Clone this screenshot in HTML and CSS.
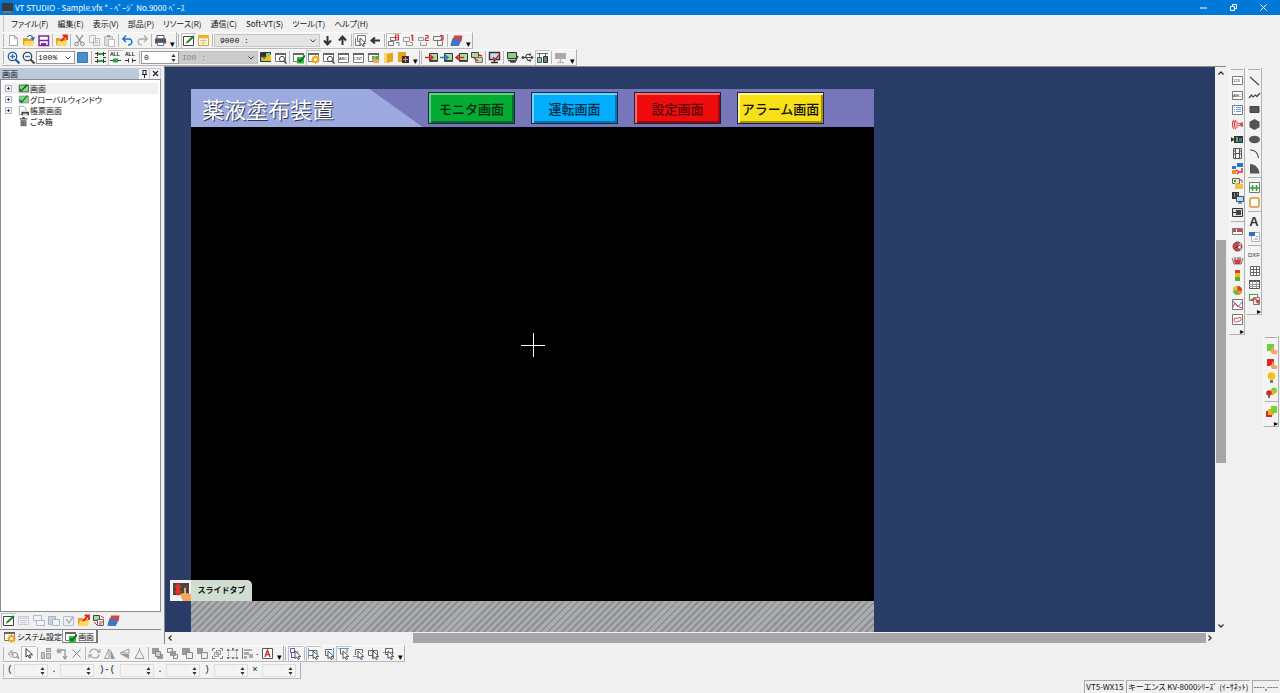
FILE: index.html
```html
<!DOCTYPE html>
<html lang="ja">
<head>
<meta charset="utf-8">
<title>VT STUDIO - Sample.vfx</title>
<link rel="stylesheet" href="styles.css">
</head>
<body>
<svg class="defs" aria-hidden="true">
  <symbol id="win" viewBox="0 0 13 13"><path d="M1.500 2.500h10v8h-10z" fill="#fff" stroke="#777"/><path d="M1 3h11" stroke="#666" stroke-width="2"/></symbol>
  <symbol id="cur" viewBox="0 0 13 13"><path d="M6 4v7.500l1.800-1.500 1.400 2.600 1.200-.6L9.200 9.500h2.600z" fill="#fff" stroke="#444" stroke-width=".9"/></symbol>
  <symbol id="mon" viewBox="0 0 13 13"><path d="M4.500 2.500h8v7h-8z" fill="#a8dca0" stroke="#333"/><path d="M4 10.500h9" stroke="#555"/></symbol>
  <symbol id="hand" viewBox="0 0 13 13"><path d="M5 8l2-.5V5l1.500-.3V8l4 .7-.5 3.300H7z" fill="#f2a85c"/></symbol>
  <symbol id="mag" viewBox="0 0 13 13"><circle cx="8" cy="8" r="2.600" fill="#fff" stroke="#444"/><path d="M10 10l2.500 2.500" stroke="#444" stroke-width="1.500"/></symbol>
  <symbol id="fold" viewBox="0 0 13 13"><path d="M1 4h4l1 1h5v7H1z" fill="#e8a020"/><path d="M1 12l2-5h9.500l-1.500 5z" fill="#ffd768"/></symbol>
  <symbol id="layers" viewBox="0 0 13 13"><path d="M4 1.500h8.500l-1 6H3z" fill="#d8443c"/><path d="M2.500 4H11l-1 6H1.500z" fill="#8a5a80"/><path d="M1.500 6.500H10l-1 5.500H.5z" fill="#3c78c8"/></symbol>
  <symbol id="edit" viewBox="0 0 13 13"><path d="M1.500 2.500h10v9h-10z" fill="#fff" stroke="#444"/><path d="M5 8.500l7-6.500" stroke="#168c28" stroke-width="2"/><path d="M3.500 10l1-2 1 1z" fill="#a52"/></symbol>
  <symbol id="gear" viewBox="0 0 13 13"><circle cx="8.500" cy="8.500" r="2.500" fill="#fff" stroke="#f0a818" stroke-width="2"/><path d="M8.500 4v9M4 8.500h9M5.500 5.500l6 6M11.500 5.500l-6 6" stroke="#f0a818"/><circle cx="8.500" cy="8.500" r="1.500" fill="#fff"/></symbol>
  <symbol id="check" viewBox="0 0 13 13"><path d="M5 6h7v6.500H5z" fill="#38b840"/><path d="M6 8.500l2 2 5-6" stroke="#087018" stroke-width="1.800"/></symbol>
  <symbol id="chev" viewBox="0 0 8 8"><path d="M1.500 5.500L4 3l2.500 2.500" stroke="#333" stroke-width="1.300"/></symbol>
  <symbol id="ud" viewBox="0 0 8 10"><path d="M2 4l2-3 2 3zM2 6l2 3 2-3z" fill="#333"/></symbol>
</svg>

<header class="titlebar">
  <svg class="ic" viewBox="0 0 13 13"><path d="M1 2h11v8H1z" fill="#383c40"/><path d="M2 10h9v2H2z" fill="#777"/></svg>
  <h1>VT STUDIO - Sample.vfx * - ﾍﾟｰｼﾞ No.9000 ﾍﾞｰｽ</h1>
  <div class="winbtns">
    <button aria-label="最小化"><svg class="ic" viewBox="0 0 13 13"><path d="M3 7h7" stroke="#fff"/></svg></button>
    <button aria-label="元に戻す"><svg class="ic" viewBox="0 0 13 13"><path d="M3.500 5.500h4v4h-4zM5.500 5V3.500h4v4H8" stroke="#fff"/></svg></button>
    <button aria-label="閉じる"><svg class="ic" viewBox="0 0 13 13"><path d="M3.500 3.500l6 6M9.500 3.500l-6 6" stroke="#fff"/></svg></button>
  </div>
</header>

<nav class="menu">
  <button>ファイル(F)</button><button>編集(E)</button><button>表示(V)</button><button>部品(P)</button><button>リソース(R)</button><button>通信(C)</button><button>Soft-VT(S)</button><button>ツール(T)</button><button>ヘルプ(H)</button>
</nav>

<div class="toolrow">
  <div class="bar first">
    <button aria-label="新規"><svg class="ic" viewBox="0 0 13 13"><path d="M2.500 1.500h5l3 3v7h-8zM7.500 1.500v3h3" fill="#fff" stroke="#aaa"/></svg></button>
    <button aria-label="開く"><svg class="ic" viewBox="0 0 13 13"><use href="#fold"/><path d="M5 3c3-3 6-1 6 2M9 4l2 2 1.500-3" stroke="#2868b0" stroke-width="1.200"/></svg></button>
    <button aria-label="保存"><svg class="ic" viewBox="0 0 13 13"><path d="M2 2h9.500v9.500H2z" fill="#fff" stroke="#7a2ca0" stroke-width="1.500"/><path d="M2 6.500h9" stroke="#7a2ca0" stroke-width="1.500"/><path d="M4 9h5v3H4z" fill="#7a2ca0"/></svg></button>
    <i class="sep"></i>
    <button aria-label="書き出し"><svg class="ic" viewBox="0 0 13 13"><use href="#fold"/><path d="M6 7l5-5M7.500 1.500H12V6" stroke="#d83018" stroke-width="1.800"/></svg></button>
    <i class="sep"></i>
    <button aria-label="切り取り"><svg class="ic" viewBox="0 0 13 13"><path d="M3 1l5.500 8M10 1L4.500 9" stroke="#888" stroke-width="1.300"/><circle cx="3.500" cy="10" r="1.800" stroke="#888"/><circle cx="9.500" cy="10" r="1.800" stroke="#888"/></svg></button>
    <button aria-label="コピー"><svg class="ic" viewBox="0 0 13 13"><path d="M1.500 1.500h6v7h-6zM5.500 4.500h6v7h-6z" fill="#f4f4f4" stroke="#bbb"/><path d="M7 7h3M7 9h3" stroke="#bbb"/></svg></button>
    <button aria-label="貼り付け"><svg class="ic" viewBox="0 0 13 13"><path d="M1.500 2.500h8v9h-8z" fill="#ddd" stroke="#bbb"/><path d="M5.500 5.500h6v7h-6z" fill="#fff" stroke="#bbb"/><path d="M4 1h3v2H4z" fill="#999"/></svg></button>
    <i class="sep"></i>
    <button aria-label="元に戻す"><svg class="ic" viewBox="0 0 13 13"><path d="M3 5h5c4 0 4 6-1 6M5 1.500L1.800 5 5 8" stroke="#2070c8" stroke-width="1.500"/></svg></button>
    <button aria-label="やり直し"><svg class="ic" viewBox="0 0 13 13"><path d="M10 5H5c-4 0-4 6 1 6M8 1.500L11.200 5 8 8" stroke="#aaa" stroke-width="1.300"/></svg></button>
    <i class="sep"></i>
    <button aria-label="印刷"><svg class="ic" viewBox="0 0 13 13"><path d="M3 1.500h7V5H3z" fill="#fff" stroke="#555"/><path d="M1 4.500h11v5H1z" fill="#555"/><path d="M3.500 8.500h6v3h-6z" fill="#fff" stroke="#4a78a8"/></svg></button>
    <button class="more" aria-label="その他">▾</button>
  </div>
  <div class="bar">
    <button class="on" aria-label="編集"><svg class="ic"><use href="#edit"/></svg></button>
    <button aria-label="一覧"><svg class="ic" viewBox="0 0 13 13"><path d="M1.500 1.500h10v10h-10z" fill="#fff" stroke="#d8a828"/><path d="M1 3h11" stroke="#f0b428" stroke-width="3"/><path d="M3 6.500h7M3 9h7M6.500 5v6" stroke="#d8c080"/></svg></button>
    <i class="sep"></i>
    <select class="combo page" aria-label="ページ"><option>9000 :</option></select>
    <button aria-label="次のページ"><svg class="ic" viewBox="0 0 13 13"><path d="M6.500 2v8M3 6.500l3.500 4 3.500-4" stroke="#333" stroke-width="2"/></svg></button>
    <button aria-label="前のページ"><svg class="ic" viewBox="0 0 13 13"><path d="M6.500 11V3M3 6.500l3.500-4 3.500 4" stroke="#333" stroke-width="2"/></svg></button>
    <i class="sep"></i>
    <button class="on" aria-label="部品選択"><svg class="ic" viewBox="0 0 13 13"><path d="M3.500 1.500h8v6h-8zM1.500 4v7.500H6" stroke="#777"/><use href="#cur"/></svg></button>
    <button aria-label="戻る"><svg class="ic" viewBox="0 0 13 13"><path d="M11 6.500H3M6 3.500l-3.500 3 3.500 3" stroke="#333" stroke-width="2"/></svg></button>
    <i class="sep"></i>
    <button class="on" aria-label="ウィンドウ0"><svg class="ic" viewBox="0 0 13 13"><path d="M3.500 3.500h5v3h-5zM1.500 7.500h5v4h-5zM9 8.500h3V12" stroke="#777"/><path d="M8.500 1h3v5h-3zM8.500 3.500h3" stroke="#d83030" stroke-width="1.200"/></svg></button>
    <button aria-label="ウィンドウ1"><svg class="ic" viewBox="0 0 13 13"><path d="M1.500 3.500h6v4h-6zM4.500 8v3.500h6v-3H8" stroke="#999"/><path d="M9 1.500h1.500V7" stroke="#d83030" stroke-width="1.500"/></svg></button>
    <button aria-label="ウィンドウ2"><svg class="ic" viewBox="0 0 13 13"><path d="M1.500 3.500h5v3h-5zM3.500 8v3.500h6v-3" stroke="#999"/><path d="M8 1.500h3v2.500H8.500v2.500H12" stroke="#d83030" stroke-width="1.200"/></svg></button>
    <button aria-label="ウィンドウ3"><svg class="ic" viewBox="0 0 13 13"><path d="M1.500 2.500h8v4h-8zM5.500 7v4.500h5V7" stroke="#777"/><path d="M8 1.500h3V6H8M9 4h2" stroke="#d83030" stroke-width="1.200"/></svg></button>
    <i class="sep"></i>
    <button aria-label="レイヤ"><svg class="ic"><use href="#layers"/></svg></button>
    <button class="more" aria-label="その他">▾</button>
  </div>
</div>

<div class="toolrow">
  <div class="bar first">
    <button aria-label="拡大"><svg class="ic" viewBox="0 0 13 13"><circle cx="5.500" cy="5.500" r="4.200" fill="#fff" stroke="#285888" stroke-width="1.300"/><path d="M8.500 8.500l4 4" stroke="#285888" stroke-width="2"/><path d="M3 5.500h5M5.500 3v5" stroke="#2878d0" stroke-width="1.500"/></svg></button>
    <button aria-label="縮小"><svg class="ic" viewBox="0 0 13 13"><circle cx="5.500" cy="5.500" r="4.200" fill="#fff" stroke="#444" stroke-width="1.300"/><path d="M8.500 8.500l4 4" stroke="#444" stroke-width="2"/><path d="M3 5.500h5" stroke="#2878d0" stroke-width="1.500"/></svg></button>
    <select class="combo zoom" aria-label="倍率"><option>100%</option></select>
    <button aria-label="背景色"><svg class="ic" viewBox="0 0 13 13"><path d="M1.500 1.500h10v10h-10z" fill="#4a8ccc" stroke="#3a78b8"/></svg></button>
    <i class="sep"></i>
    <button aria-label="間隔"><svg class="ic" viewBox="0 0 13 13"><path d="M1 2.500h11M1 6.500h3M9 6.500h3M1 10.500h11" stroke="#333"/><path d="M4 2h5v2H4zM4 9h5v2H4z" fill="#2ca838"/><path d="M3.500 1v4M9.500 1v4M3.500 8v4M9.500 8v4" stroke="#333"/></svg></button>
    <button class="on" aria-label="全て表示"><svg class="ic" viewBox="0 0 13 13"><text x="1" y="5" class="tiny">ALL</text><path d="M1 9.500h11" stroke="#333"/><path d="M4 7.500h5v4H4z" fill="#2ca838"/></svg></button>
    <button aria-label="全て隠す"><svg class="ic" viewBox="0 0 13 13"><text x="1" y="5" class="tiny">ALL</text><path d="M1 9.500h3M9 9.500h3M4.500 7.500v4M8.500 7.500v4" stroke="#333"/></svg></button>
    <i class="sep"></i>
    <span class="spin state"><input aria-label="状態" value="0"><svg class="ud"><use href="#ud"/></svg></span>
    <select class="combo ident" aria-label="ID" disabled><option>ID0 :</option></select>
    <button aria-label="色替え"><svg class="ic" viewBox="0 0 13 13"><path d="M1.500 1.500h10v9h-10z" fill="#8c6" stroke="#333"/><path d="M2 2h5v4H2z" fill="#333"/><path d="M4 10l8-7v7z" fill="#f0c020"/><path d="M3 6l3-1v3z" fill="#e02818"/></svg></button>
    <button aria-label="画面検索"><svg class="ic"><use href="#win"/><use href="#mag"/></svg></button>
    <i class="sep"></i>
    <button aria-label="画面チェック"><svg class="ic"><use href="#win"/><use href="#check"/></svg></button>
    <button class="on" aria-label="画面設定"><svg class="ic"><use href="#win"/><use href="#gear"/></svg></button>
    <button aria-label="検索"><svg class="ic"><use href="#win"/><use href="#mag"/></svg></button>
    <button aria-label="ABC"><svg class="ic" viewBox="0 0 13 13"><path d="M1.500 2.500h10v9h-10z" fill="#fff" stroke="#777"/><path d="M1 3h11" stroke="#666" stroke-width="2"/><text x="2" y="9" class="micro">ABC</text></svg></button>
    <button aria-label="CNT"><svg class="ic" viewBox="0 0 13 13"><path d="M1.500 2.500h10v9h-10z" fill="#fff" stroke="#777"/><path d="M1 3h11" stroke="#666" stroke-width="2"/><text x="2" y="9" class="micro">CNT</text></svg></button>
    <button aria-label="スイッチ"><svg class="ic" viewBox="0 0 13 13"><use href="#win"/><path d="M5 5h7v5H5z" fill="#38b838"/><use href="#hand"/></svg></button>
    <button aria-label="マニュアル"><svg class="ic" viewBox="0 0 13 13"><path d="M2 2h4v10H2z" fill="#f8d470"/><path d="M5 3l6-1.500v9L5 12z" fill="#e8a420"/></svg></button>
    <button aria-label="デバイス"><svg class="ic" viewBox="0 0 13 13"><path d="M1 1h8v10H1z" fill="#e8a420"/><path d="M5 5h7v7H5z" fill="#333"/><path d="M6 8.500h5M8.500 6v5" stroke="#e88"/></svg></button>
    <button class="more" aria-label="その他">▾</button>
  </div>
  <div class="bar">
    <button aria-label="転送"><svg class="ic"><use href="#mon"/><path d="M0 6.500h7M5 4l3 2.500L5 9" stroke="#d82820" stroke-width="1.600"/></svg></button>
    <button aria-label="差分転送"><svg class="ic"><use href="#mon"/><path d="M0 6.500h7M5 4l3 2.500L5 9" stroke="#2878c8" stroke-width="1.600"/></svg></button>
    <button aria-label="受信"><svg class="ic"><use href="#mon"/><path d="M1 6.500h8M4 4L1 6.500 4 9" stroke="#d82820" stroke-width="1.600"/></svg></button>
    <button aria-label="照合"><svg class="ic" viewBox="0 0 13 13"><path d="M1.500 1.500h7v5h-7z" fill="#a8dca0" stroke="#444"/><path d="M5.500 6.500h7v5h-7z" fill="#b8dcb0" stroke="#777"/><path d="M3 6l5 4M9 4l3 1" stroke="#d82820" stroke-width="1.400"/></svg></button>
    <i class="sep"></i>
    <button aria-label="シミュレータ"><svg class="ic" viewBox="0 0 13 13"><path d="M1.500 1.500h10v7h-10z" fill="#c4dcf0" stroke="#333" stroke-width="1.400"/><path d="M3 11.500h7M6.500 9v2" stroke="#333" stroke-width="1.500"/><path d="M5 6l2 2.500L12 3" stroke="#d82820" stroke-width="1.500"/></svg></button>
    <i class="sep"></i>
    <button aria-label="PC接続"><svg class="ic" viewBox="0 0 13 13"><path d="M1.500 1.500h9v6h-9z" fill="#8ccc80" stroke="#333"/><path d="M4 11h5l3-6M2 9.500h8" stroke="#444" stroke-width="1.500"/></svg></button>
    <button aria-label="USB"><svg class="ic" viewBox="0 0 13 13"><path d="M2 6.500h9M4 6.500l2-3h2M5 6.500l2 3h2" stroke="#444" stroke-width="1.100"/><circle cx="2" cy="6.500" r="1.500" fill="#444"/><path d="M10 4.500l3 2-3 2zM8 2.500h2v2H8zM8 8.500h2v2H8z" fill="#444"/></svg></button>
    <button class="on" aria-label="ネットワーク"><svg class="ic" viewBox="0 0 13 13"><path d="M1 2.500h11M3.500 2v4M9.500 2v4" stroke="#666"/><path d="M1.500 6.500h4v5h-4z" fill="#9cc890" stroke="#357"/><path d="M7.500 5.500h4v6h-4z" fill="#686" stroke="#333"/></svg></button>
    <i class="sep"></i>
    <button aria-label="VT本体" disabled><svg class="ic" viewBox="0 0 13 13"><path d="M1 2h11v6H1z" fill="#aaa"/><path d="M6.500 8v3M3 11.500h7" stroke="#bbb" stroke-width="1.500"/></svg></button>
    <button class="more" aria-label="その他">▾</button>
  </div>
</div>

<main class="work">
  <aside class="side">
    <div class="side-head"><h2>画面</h2><button aria-label="固定"><svg class="ic s" viewBox="0 0 9 9"><path d="M3 1v4M6 1v4M3 1.500h3M2 5.500h5M4.500 6v3" stroke="#222"/></svg></button><button aria-label="閉じる"><svg class="ic s" viewBox="0 0 9 9"><path d="M2 2l5 5M7 2L2 7" stroke="#222" stroke-width="1.200"/></svg></button></div>
    <ul class="tree">
      <li class="sel"><i class="plus"></i><svg class="ic t" viewBox="0 0 13 13"><path d="M1.500 2.500h11v8h-11z" fill="#7be07a" stroke="#444"/><path d="M5 8l6-6" stroke="#143" stroke-width="1.500"/><path d="M2 7l3 3" stroke="#143" stroke-width="1.500"/></svg>画面</li>
      <li><i class="plus"></i><svg class="ic t" viewBox="0 0 13 13"><path d="M1.500 2.500h11v8h-11z" fill="#7be07a" stroke="#888"/><path d="M5 9l6-7" stroke="#174" stroke-width="1.500"/><path d="M2 7l3 3" stroke="#143" stroke-width="1.500"/></svg>グローバルウィンドウ</li>
      <li><i class="plus"></i><svg class="ic t" viewBox="0 0 13 13"><path d="M1.500 1.500h5l3 3v7h-8z" fill="#fff" stroke="#999"/><path d="M4 8h9v4H4z" fill="#444"/><path d="M6 6h5v2H6zM6 10h5v2H6z" fill="#ddd"/></svg>帳票画面</li>
      <li><i class="plus none"></i><svg class="ic t" viewBox="0 0 13 13"><path d="M2 3.500h9M5 2h3" stroke="#555" stroke-width="1.500"/><path d="M3 5h7v7H3z" fill="#666"/><path d="M5 6v5M8 6v5" stroke="#999"/></svg>ごみ箱</li>
    </ul>
    <div class="side-tools">
      <button class="on" aria-label="編集"><svg class="ic"><use href="#edit"/></svg></button>
      <button disabled aria-label="一覧"><svg class="ic" viewBox="0 0 13 13"><path d="M1.500 2.500h10v8h-10zM1 4h11M3 6.500h7M3 8.500h7" stroke="#c4ccd8"/></svg></button>
      <button disabled aria-label="コピー"><svg class="ic" viewBox="0 0 13 13"><path d="M1.500 1.500h8v5h-8zM4.500 6.500h8v5h-8z" fill="#f0f4fa" stroke="#b0bccc"/></svg></button>
      <button disabled aria-label="貼り付け"><svg class="ic" viewBox="0 0 13 13"><path d="M1.500 2.500h7v8h-7z" fill="#c8d0dc" stroke="#a8b4c8"/><path d="M5.500 5.500h7v6h-7z" fill="#f0f4fa" stroke="#a8b4c8"/></svg></button>
      <button disabled aria-label="削除"><svg class="ic" viewBox="0 0 13 13"><path d="M1.500 2.500h10v9h-10z" stroke="#b4c0d0"/><path d="M4 5l3 4 4-6" stroke="#a8b4c8" stroke-width="1.500"/></svg></button>
      <button aria-label="書き出し"><svg class="ic" viewBox="0 0 13 13"><use href="#fold"/><path d="M6 7l5-5M7.500 1.500H12V6" stroke="#d83018" stroke-width="1.800"/></svg></button>
      <button aria-label="置換"><svg class="ic" viewBox="0 0 13 13"><path d="M1.500 1.500h6v5h-6z" fill="#a8d8a0" stroke="#444"/><path d="M5.500 5.500h6v6h-6z" fill="#fff" stroke="#666"/><path d="M9 2l3 2M2 8l3 3M7 8h4M7 10h3" stroke="#d82820"/></svg></button>
      <button aria-label="レイヤ"><svg class="ic"><use href="#layers"/></svg></button>
    </div>
    <div class="side-tabs">
      <button><svg class="ic"><use href="#win"/><use href="#gear"/></svg>システム設定</button>
      <button class="active"><svg class="ic"><use href="#win"/><use href="#check"/></svg>画面</button>
    </div>
  </aside>

  <section class="editor">
    <div class="canvas">
      <div class="artboard">
        <div class="screen">
          <div class="banner">
            <h2>薬液塗布装置</h2>
            <div class="nav">
              <button class="green">モニタ画面</button><button class="blue">運転画面</button><button class="red">設定画面</button><button class="yellow">アラーム画面</button>
            </div>
          </div>
          <svg class="cross" viewBox="0 0 24 24"><path d="M0 12.500h24M12.500 0v24" stroke="#fff"/></svg>
          <div class="slide">
            <svg class="slide-ic" viewBox="0 0 21 21"><path d="M0 0h21v21H0z" fill="#f4f2ee"/><path d="M3 3h16v12H3z" fill="#484444"/><path d="M8 3l4 4h-2v4h2l-4 5-4-5h2V7H4z" fill="#e03030"/><path d="M10 14l4-1V8l2-.5V13l5 1v7h-8z" fill="#f2a85c"/></svg>
            <span>スライドタブ</span>
          </div>
        </div>
        <div class="hatch"></div>
      </div>
    </div>
    <div class="vscroll"><svg class="ch"><use href="#chev"/></svg><i class="vt"></i><svg class="ch down"><use href="#chev"/></svg></div>
    <div class="hscroll"><svg class="ch left"><use href="#chev"/></svg><i class="ht"></i><svg class="ch right"><use href="#chev"/></svg></div>
  </section>

  <aside class="palettes">
    <div class="vbar">
      <div class="group g10">
        <button aria-label="数値"><svg class="ic" viewBox="0 0 13 13"><path d="M1.500 2.500h10v8h-10z" fill="#fff" stroke="#777"/><text x="2" y="8" class="micro">123</text></svg></button>
        <button aria-label="文字"><svg class="ic" viewBox="0 0 13 13"><path d="M1.500 2.500h10v8h-10z" fill="#fff" stroke="#777"/><text x="2" y="8" class="micro">ABC</text></svg></button>
        <button aria-label="リスト"><svg class="ic" viewBox="0 0 13 13"><path d="M1.500 2.500h10v9h-10z" fill="#fff" stroke="#777"/><path d="M3 4.500h1M3 6.500h1M3 8.500h1M5 4.500h5M5 6.500h5M5 8.500h5" stroke="#58a0e0"/></svg></button>
        <button aria-label="アラーム"><svg class="ic" viewBox="0 0 13 13"><path d="M3 2c-2 2-2 7 0 9M5 2c-2 2-2 7 0 9" stroke="#e04848" stroke-width="1.200"/><path d="M6 3v7M7 5.500h3M7 7.500h3" stroke="#e04848"/><path d="M9 5l3-1v5l-3-1z" fill="#e04848"/></svg></button>
        <button aria-label="カメラ"><svg class="ic" viewBox="0 0 13 13"><path d="M3 3h9v7H3z" fill="#333"/><path d="M0 4l3 2v1L0 9z" fill="#333"/><path d="M5 4h2v5H5z" fill="#58b848"/><path d="M8 5h3v4H8z" fill="#3878a8"/></svg></button>
        <button aria-label="動画"><svg class="ic" viewBox="0 0 13 13"><path d="M2.500 1.500h8v10h-8zM4.500 1v11M8.500 1v11M2 4h2M2 7h2M9 4h2M9 7h2M4.500 6.500h4" stroke="#555"/></svg></button>
        <button aria-label="通信"><svg class="ic" viewBox="0 0 13 13"><path d="M6 1h6v4H6zM1 4h4v3H1z" fill="#2878c8"/><path d="M1 8h4v4H1z" fill="#f09020"/><path d="M7 10h4V6M5 8l3 2-2 2" stroke="#e03030" stroke-width="1.500"/></svg></button>
        <button aria-label="レシピ"><svg class="ic" viewBox="0 0 13 13"><path d="M1.500 1.500h7v5h-7z" fill="#d8ecd0" stroke="#666"/><path d="M3 3h2v2H3z" fill="#30a030"/><path d="M4 6h3l1 1h4v5H4z" fill="#f0c050"/><path d="M8 3h3v3" stroke="#e03030"/></svg></button>
        <button aria-label="リモート"><svg class="ic" viewBox="0 0 13 13"><path d="M1 1h7v7H1z" fill="#333"/><path d="M5.500 5.500h7v5h-7z" fill="#b8dcf4" stroke="#357"/><path d="M7 12h4" stroke="#333"/><path d="M3 3h1M6 3h1M3 5h1" stroke="#fff"/></svg></button>
        <button aria-label="画面切替"><svg class="ic" viewBox="0 0 13 13"><path d="M1.500 2.500h10v8h-10z" fill="#ddd" stroke="#333"/><path d="M5 4h5v5H5z" fill="#444"/><path d="M2 6.500h3" stroke="#333"/></svg></button>
      </div>
      <i class="hsep"></i>
      <div class="group g7">
        <button aria-label="バー"><svg class="ic" viewBox="0 0 13 13"><path d="M1.500 3.500h10v6h-10z" fill="#fff" stroke="#777"/><path d="M6 4h5v3H6z" fill="#e04040"/><path d="M2 4h3v3H2z" fill="#b55"/></svg></button>
        <button aria-label="メータ"><svg class="ic" viewBox="0 0 13 13"><circle cx="6.500" cy="6.500" r="4.500" fill="#d84040" stroke="#555"/><path d="M6.500 6.500l3-4v7z" fill="#fff"/><path d="M4 8l5-3" stroke="#333"/></svg></button>
        <button aria-label="タンク"><svg class="ic" viewBox="0 0 13 13"><path d="M1 4l2 6h7l2-6" stroke="#777" fill="#fcc"/><path d="M3 6h7l-1 4H4z" fill="#d83838"/><path d="M4 3v3M7 3v3M9 3v3" stroke="#555"/></svg></button>
        <button aria-label="積み上げ"><svg class="ic" viewBox="0 0 13 13"><path d="M4 1h5v3H4z" fill="#e03838"/><path d="M4 4h5v4H4z" fill="#f4b420"/><path d="M4 8h5v4H4z" fill="#58b038"/></svg></button>
        <button aria-label="円グラフ"><svg class="ic" viewBox="0 0 13 13"><circle cx="6.500" cy="6.500" r="4.500" fill="#58b848"/><path d="M6.500 6.500V2a4.500 4.500 0 0 0-4.500 4.500z" fill="#f4c020"/><path d="M6.500 6.500V2a4.500 4.500 0 0 1 4.500 5z" fill="#e03838"/><path d="M6.500 6.500l4.500.5a4.500 4.500 0 0 1-4 4z" fill="#f09020"/></svg></button>
        <button aria-label="トレンド"><svg class="ic" viewBox="0 0 13 13"><path d="M1.500 1.500h10v10h-10z" fill="#fff" stroke="#777"/><path d="M2 3l5 6 4-5" stroke="#3878c8"/><path d="M2 9l2-4 4 4 3 1" stroke="#d83838"/></svg></button>
        <button aria-label="XYグラフ"><svg class="ic" viewBox="0 0 13 13"><path d="M1.500 1.500h10v10h-10z" fill="#fff" stroke="#777"/><path d="M3 7c0-4 3 0 6-3 2 2 1 5-2 4-2 2-4 1-4-1z" stroke="#d83838"/></svg></button>
      </div>
      <button class="vmore" aria-label="その他">▸</button>
    </div>
    <div class="vbar">
      <div class="group g7">
        <button aria-label="直線"><svg class="ic" viewBox="0 0 13 13"><path d="M2 3l9 8" stroke="#444" stroke-width="1.200"/></svg></button>
        <button aria-label="折れ線"><svg class="ic" viewBox="0 0 13 13"><path d="M1 9l2.500-3 1.500 2 2.500-2L9 7.500 12 4" stroke="#444" stroke-width="1.200"/></svg></button>
        <button aria-label="四角"><svg class="ic" viewBox="0 0 13 13"><path d="M2 3.500h9v6H2z" fill="#555" stroke="#444"/></svg></button>
        <button aria-label="多角形"><svg class="ic" viewBox="0 0 13 13"><path d="M6.500 1l5 2.700v5.600l-5 2.700-5-2.700V3.700z" fill="#555"/></svg></button>
        <button aria-label="円"><svg class="ic" viewBox="0 0 13 13"><ellipse cx="6.500" cy="6.500" rx="5.500" ry="3.800" fill="#555"/></svg></button>
        <button aria-label="円弧"><svg class="ic" viewBox="0 0 13 13"><path d="M2 3c5 0 8 3 8.500 8" stroke="#444" stroke-width="1.200"/></svg></button>
        <button aria-label="扇形"><svg class="ic" viewBox="0 0 13 13"><path d="M2 2c5 0 9 4 9.500 9.500H2z" fill="#555"/></svg></button>
      </div>
      <i class="hsep"></i>
      <div class="group g2">
        <button aria-label="目盛"><svg class="ic" viewBox="0 0 13 13"><path d="M1.500 1.500h10v10h-10z" fill="#fff" stroke="#777"/><path d="M2 7h9M4.500 4v6M8.500 4v6" stroke="#28a038" stroke-width="1.500"/></svg></button>
        <button aria-label="枠"><svg class="ic" viewBox="0 0 13 13"><rect x="2" y="2" width="9" height="9" rx="1.500" fill="#fff" stroke="#d8942c" stroke-width="1.500"/></svg></button>
      </div>
      <i class="hsep"></i>
      <div class="group g2">
        <button class="letter" aria-label="文字列">A</button>
        <button aria-label="画像"><svg class="ic" viewBox="0 0 13 13"><path d="M3.500 2.500h8v9h-8z" fill="#fff" stroke="#a8b0b8"/><path d="M1 2h6v4H1z" fill="#3070c0"/><path d="M6 9h4M8 6l2 1" stroke="#6898c8"/></svg></button>
      </div>
      <i class="hsep"></i>
      <div class="group g4">
        <button class="dxf">DXF</button>
        <button aria-label="格子"><svg class="ic" viewBox="0 0 13 13"><path d="M2.500 2.500h9v9h-9zM2 5.500h9M2 8.500h9M5.500 2v9M8.500 2v9" stroke="#666" fill="#fff"/></svg></button>
        <button aria-label="表"><svg class="ic" viewBox="0 0 13 13"><path d="M1.500 2.500h10v8h-10z" fill="#fff" stroke="#555"/><path d="M1 3h11" stroke="#555" stroke-width="2"/><path d="M1 6.500h10M1 8.500h10M4.500 3v7M8.500 3v7" stroke="#999"/></svg></button>
        <button aria-label="部品登録"><svg class="ic" viewBox="0 0 13 13"><path d="M1.500 1.500h8v6h-8z" fill="#fff" stroke="#4a9048"/><path d="M5.500 4.500h6v7h-6z" fill="#eee" stroke="#777"/><path d="M3 8c0-3 6-3 7 1M8 8l2 2 1-3" stroke="#e03838" stroke-width="1.400"/></svg></button>
      </div>
      <button class="vmore" aria-label="その他">▸</button>
    </div>
    <div class="vbar low">
      <div class="group g4">
        <button aria-label="スイッチ"><svg class="ic" viewBox="0 0 13 13"><path d="M2 2h7v7H2z" fill="#70d038"/><use href="#hand"/></svg></button>
        <button aria-label="切替スイッチ"><svg class="ic" viewBox="0 0 13 13"><path d="M2 2h7v7H2z" fill="#d82828"/><use href="#hand"/></svg></button>
        <button aria-label="ランプ"><svg class="ic" viewBox="0 0 13 13"><circle cx="6.500" cy="5" r="3.800" fill="#f8c010"/><path d="M5 9h3v3H5z" fill="#777"/></svg></button>
        <button aria-label="多色ランプ"><svg class="ic" viewBox="0 0 13 13"><circle cx="9" cy="4.500" r="3" fill="#78d038"/><path d="M5 5l5-1-1 5H6z" fill="#f0b020"/><circle cx="4" cy="7" r="2.800" fill="#d82828"/><path d="M3 9h2v3H3z" fill="#666"/></svg></button>
      </div>
      <i class="hsep"></i>
      <div class="group g1"><button aria-label="カタログ"><svg class="ic" viewBox="0 0 13 13"><path d="M1 6h6v6H1z" fill="#d82828"/><path d="M3 4h6v6H3z" fill="#f0b020"/><path d="M6 1h6v7H6z" fill="#78d038"/></svg></button></div>
      <button class="vmore" aria-label="その他">▸</button>
    </div>
  </aside>
</main>

<div class="toolrow foot">
  <div class="bar first">
    <button aria-label="検索"><svg class="ic" viewBox="0 0 13 13"><path d="M1 7l4-4v3h4l3 5M1 7l4 4" stroke="#aaa" fill="#ccc"/><circle cx="8" cy="8" r="2.500" fill="#fff" stroke="#888"/><path d="M10 10l2 2" stroke="#888"/></svg></button>
    <button class="on" aria-label="選択"><svg class="ic" viewBox="0 0 13 13"><path d="M4 1.500v8.500l2-1.800 1.500 3 1.300-.6L7.500 7.800h3z" fill="#fff" stroke="#333"/></svg></button>
    <i class="sep"></i>
    <button aria-label="整列"><svg class="ic" viewBox="0 0 13 13"><path d="M1.500 5.500h3v6h-3zM6.500 6.500h4v5h-4zM6.500 1.500h4v3h-4z" fill="#ccc" stroke="#999"/></svg></button>
    <button aria-label="置換"><svg class="ic" viewBox="0 0 13 13"><circle cx="4" cy="4" r="2.500" fill="#aaa"/><path d="M6 3h4v4M10 7v5M8 9l2 3 2-3" stroke="#999" stroke-width="1.300"/></svg></button>
    <button aria-label="削除"><svg class="ic" viewBox="0 0 13 13"><path d="M2.500 2.500l8 8M10.500 2.500l-8 8" stroke="#888"/></svg></button>
    <i class="sep"></i>
    <button aria-label="回転"><svg class="ic" viewBox="0 0 13 13"><path d="M2 6c0-5 7-5 9-1M11 7c0 5-7 5-9 1M9 5h3V2M4 8H1v3" stroke="#aaa" stroke-width="1.300"/></svg></button>
    <button aria-label="左右反転"><svg class="ic" viewBox="0 0 13 13"><path d="M6 2v9.500H1.500z" stroke="#999"/><path d="M7.500 2v10H12z" fill="#999"/></svg></button>
    <button aria-label="上下反転"><svg class="ic" viewBox="0 0 13 13"><path d="M11 2v4H2z" stroke="#999"/><path d="M11 7v5L2 7z" fill="#999"/></svg></button>
    <button aria-label="三角"><svg class="ic" viewBox="0 0 13 13"><path d="M6.500 1v2M6.500 3L2 11.500h9z" stroke="#999"/></svg></button>
    <i class="sep"></i>
    <button aria-label="最前面"><svg class="ic" viewBox="0 0 13 13"><path d="M1 1h7v6H1zM6 7h6v5H6z" fill="#999"/><path d="M4.500 4.500h5v5h-5z" fill="#ccc" stroke="#888"/></svg></button>
    <button aria-label="最背面"><svg class="ic" viewBox="0 0 13 13"><path d="M1.500 1.500h5v4h-5zM7.500 7.500h4v4h-4z" fill="#eee" stroke="#888"/><path d="M4 4h6v5H4z" fill="#999"/></svg></button>
    <button aria-label="前面"><svg class="ic" viewBox="0 0 13 13"><path d="M1 1h8v7H1z" fill="#999"/><path d="M5.500 5.500h6v6h-6z" fill="#eee" stroke="#888"/></svg></button>
    <button aria-label="背面"><svg class="ic" viewBox="0 0 13 13"><path d="M1 1h6v6H1z" fill="#999"/><path d="M5.500 5.500h6v6h-6z" fill="#eee" stroke="#888"/></svg></button>
    <button aria-label="グループ化"><svg class="ic" viewBox="0 0 13 13"><path d="M1.500 4V1.500H4M9 1.500h2.500V4M1.500 9v2.500H4M9 11.500h2.500V9" stroke="#777"/><path d="M5.500 3.500h4v4h-4zM3.500 5.500h4v4h-4z" stroke="#999"/></svg></button>
    <button aria-label="グループ解除"><svg class="ic" viewBox="0 0 13 13"><path d="M1 2h2v2H1zM10 2h2v2h-2zM1 10h2v2H1zM10 10h2v2h-2zM6 1h2v2H6zM6 10h2v2H6z" fill="#777"/><path d="M2.500 3.500h8v7h-8z" stroke="#999" stroke-dasharray="2 1"/></svg></button>
    <button aria-label="左揃え"><svg class="ic" viewBox="0 0 13 13"><path d="M1.500 1v11" stroke="#777"/><path d="M3 2h8v2H3zM3 5h5v3H3zM3 9h3v3H3zM8 7h4v4H8z" fill="#aaa"/></svg></button>
    <span class="dash">-</span>
    <button aria-label="文字属性"><svg class="ic" viewBox="0 0 13 13"><path d="M1.500 1.500h10v10h-10z" fill="#fff" stroke="#555"/><path d="M4 10l2.500-7L9 10M5 7.500h3" stroke="#c83030" stroke-width="1.400"/></svg></button>
    <button class="more" aria-label="その他">▾</button>
  </div>
  <div class="bar">
    <button class="on" aria-label="図形選択"><svg class="ic" viewBox="0 0 13 13"><path d="M1.500 1.500h4v4h-4zM2.500 6v5M3 10.500h3" stroke="#7048c8"/><path d="M7 5h3" stroke="#888"/><use href="#cur"/></svg></button>
    <i class="sep"></i>
    <button class="on" aria-label="左端"><svg class="ic" viewBox="0 0 13 13"><path d="M1.500 1v11" stroke="#58a0e0"/><path d="M2 3.500h8v4M2 8.500h4" stroke="#666"/><use href="#cur"/></svg></button>
    <button aria-label="右端"><svg class="ic" viewBox="0 0 13 13"><path d="M11.500 1v11" stroke="#58a0e0"/><path d="M10 2.500H3.500v6H6" stroke="#666"/><use href="#cur"/></svg></button>
    <button class="on" aria-label="上端"><svg class="ic" viewBox="0 0 13 13"><path d="M1 1.500h11" stroke="#58a0e0"/><path d="M3.500 2v5H6M10 2v4" stroke="#666"/><use href="#cur"/></svg></button>
    <button aria-label="下端"><svg class="ic" viewBox="0 0 13 13"><path d="M1 9.500h6" stroke="#58a0e0"/><path d="M3.500 8V2.500h7V6" stroke="#666"/><use href="#cur"/></svg></button>
    <button aria-label="左右中央"><svg class="ic" viewBox="0 0 13 13"><path d="M5.500 1v11" stroke="#58a0e0"/><path d="M1.500 3.500h9v5h-9z" stroke="#666"/><use href="#cur"/></svg></button>
    <button aria-label="上下中央"><svg class="ic" viewBox="0 0 13 13"><path d="M1 5.500h11" stroke="#58a0e0"/><path d="M3.500 1.500h7v6h-7z" stroke="#666"/><use href="#cur"/></svg></button>
    <button class="more" aria-label="その他">▾</button>
  </div>
</div>
<div class="toolrow">
  <div class="bar first coords">
    <span>(</span><span class="spin"><input aria-label="X1" disabled><svg class="ud"><use href="#ud"/></svg></span><span>.</span><span class="spin"><input aria-label="Y1" disabled><svg class="ud"><use href="#ud"/></svg></span><span class="wide">)-(</span><span class="spin"><input aria-label="X2" disabled><svg class="ud"><use href="#ud"/></svg></span><span>.</span><span class="spin"><input aria-label="Y2" disabled><svg class="ud"><use href="#ud"/></svg></span><span class="mid">)</span><span class="spin"><input aria-label="幅" disabled><svg class="ud"><use href="#ud"/></svg></span><span class="mid">×</span><span class="spin"><input aria-label="高さ" disabled><svg class="ud"><use href="#ud"/></svg></span>
  </div>
</div>
<footer class="status"><span>VT5-WX15</span><span>キーエンス KV-8000ｼﾘｰｽﾞ (ｲｰｻﾈｯﾄ)</span><span>----,----</span></footer>
</body>
</html>
```
FILE: styles.css
```css
* { box-sizing: border-box; }
body {
  margin: 0;
  height: 100vh;
  display: flex;
  flex-direction: column;
  overflow: hidden;
  background: #f0f0f0;
  color: #111;
  font: 8px/11px "Noto Sans CJK JP", "Noto Sans", sans-serif;
  font-feature-settings: "palt";
}
h1, h2, ul { margin: 0; padding: 0; font: inherit; list-style: none; }
button, input, select { font: inherit; color: inherit; margin: 0; padding: 0; border: 0; background: none; border-radius: 0; font-feature-settings: inherit; }
svg { display: block; fill: none; flex: none; }
.defs { display: none; }
.ic { width: 13px; height: 13px; }
.ic.s { width: 9px; height: 9px; }
.tiny { font: bold 5px/5px "Liberation Sans", sans-serif; fill: #222; }
.micro { font: 4px/4px "Liberation Sans", sans-serif; fill: #222; }

.titlebar { flex: none; display: flex; align-items: center; height: 15px; padding-left: 1px; gap: 1px; background: #0078d7; color: #fff; }
.titlebar h1 { font-size: 8px; flex: 1; }
.winbtns { display: flex; padding-right: 2px; }
.winbtns button { width: 30px; height: 15px; display: grid; place-items: center; }

.menu { flex: none; display: flex; align-items: center; gap: 9px; height: 17px; padding-left: 7px; margin-left: 3px; border-left: 1px solid #c4c4c4; }

.toolrow { flex: none; display: flex; height: 17px; }
.toolrow.foot { height: 18px; padding-top: 1px; }
.bar { display: flex; align-items: center; height: 17px; border-right: 1px solid #b0b0b0; border-bottom: 1px solid #b8b8b8; border-top: 1px solid #fafafa; background: #f3f3f3; }
.bar::before { content: ""; width: 1px; height: 13px; margin: 0 2px 0 1px; background: #b4b4b4; }
.bar.first { margin-left: 2px; }
.bar > button { width: 15px; height: 15px; display: grid; place-items: center; }
.bar > button.more { width: 8px; font-size: 9px; line-height: 9px; align-content: end; padding-top: 3px; color: #000; }
.on { background: #f8f8f8; box-shadow: inset 1px 1px 0 #c0c0c0; }
.sep { width: 1px; height: 13px; margin: 0 1px; background: #b8b8b8; }
.combo { appearance: none; height: 13px; padding: 0 3px; border: 1px solid #999; font: 8px/11px "Liberation Mono", monospace; background: #fff url("data:image/svg+xml,%3Csvg xmlns='http://www.w3.org/2000/svg' width='8' height='6'%3E%3Cpath d='M1.500 1.500L4 4l2.500-2.500' fill='none' stroke='%23444'/%3E%3C/svg%3E") no-repeat right 2px center; }
.page { width: 106px; background-color: #e3e3e3; border-color: #c8c8c8; padding-left: 5px; }
.zoom { width: 39px; padding: 0 1px; }
.ident { width: 79px; padding: 0 2px; background-color: #ccc; border-color: #c4c4c4; color: #888; opacity: 1; }
.spin { display: flex; align-items: center; width: 34px; height: 13px; border: 1px solid #ddd; }
.spin input { flex: 1; min-width: 0; height: 11px; padding-left: 2px; font: 8px/11px "Liberation Mono", monospace; }
.spin .ud { width: 9px; height: 10px; background: #f6f6f6; }
.spin.state { width: 38px; border-color: #999; background: #fff; }
.dash { width: 5px; text-align: center; }

.work { flex: 1; min-height: 0; display: flex; }
.side { width: 161px; flex: none; display: flex; flex-direction: column; padding-top: 2px; }
.side-head { display: flex; align-items: center; height: 11px; background: #bccbdc; padding-right: 1px; gap: 1px; }
.side-head h2 { flex: 1; padding-left: 2px; }
.side-head button { width: 10px; height: 10px; background: #f3f3f3; display: grid; place-items: center; }
.tree { flex: 1; background: #fff; border: 1px solid #8c8c8c; padding: 3px 2px; }
.tree li { display: flex; align-items: center; height: 11px; gap: 1px; }
.tree .sel { background: #f0f0f0; }
.plus { width: 7px; height: 7px; margin: 0 5px 0 2px; border: 1px solid #b0b8c8; background: linear-gradient(#446, #446) center / 3px 1px no-repeat, linear-gradient(#446, #446) center / 1px 3px no-repeat, #f4f6fa; }
.plus.none { visibility: hidden; }
.ic.t { width: 11px; height: 11px; }
.side-tools { display: flex; align-items: center; height: 18px; padding-left: 1px; border-bottom: 1px solid #888; }
.side-tools button { width: 15px; height: 15px; display: grid; place-items: center; }
.side-tabs { display: flex; height: 14px; }
.side-tabs button { display: flex; align-items: center; gap: 1px; height: 13px; padding: 0 0 0 3px; border-right: 1px solid #999; }
.side-tabs .active { background: #f6f6f6; border-right: 2px solid #777; border-bottom: 1px solid #777; padding: 0 2px 0 1px; }

.editor { flex: 1; min-width: 0; margin-left: 3px; border-left: 1px solid #888; border-top: 1px solid #888; display: grid; grid-template-columns: 1fr 11px; grid-template-rows: 1fr 12px; }
.canvas { overflow: hidden; background: repeating-conic-gradient(#2d416c 0 25%, #243861 0 50%) 0 0 / 2px 2px; padding: 22px 0 0 26px; display: flex; }
.artboard { width: 683px; display: flex; flex-direction: column; }
.screen { position: relative; flex: 1; background: #000; display: flex; flex-direction: column; }
.banner { height: 38px; display: flex; align-items: center; padding-left: 11px; background: linear-gradient(#9caadf, #9caadf) no-repeat 0 0 / 178px 100%, linear-gradient(to top right, #9caadf 50%, #7876ba 51%) no-repeat 178px 0 / 53px 100%, #7876ba; }
.banner h2 { width: 226px; font-size: 22px; line-height: 30px; color: #fff; text-shadow: 1px 1px 0 #303850; font-feature-settings: normal; }
.nav { display: flex; gap: 16px; }
.nav button { width: 87px; height: 32px; font-size: 13px; font-weight: 500; font-feature-settings: normal; color: #111; border: 1px solid #1b2540; white-space: nowrap; }
.green { background: #06ab34; box-shadow: inset 2px 2px 0 #5ed080, inset -2px -2px 0 #04702a; }
.nav .green { color: #04290e; }
.blue { background: #02aefc; box-shadow: inset 2px 2px 0 #70d4ff, inset -2px -2px 0 #0674b0; }
.nav .blue { color: #062c48; }
.red { background: #ee0c0c; box-shadow: inset 2px 2px 0 #fc6c60, inset -2px -2px 0 #980a10; }
.nav .red { color: #5c0408; }
.yellow { background: #f8e018; box-shadow: inset 2px 2px 0 #fff490, inset -2px -2px 0 #a89008; }
.cross { width: 24px; height: 24px; position: absolute; left: 50%; top: 50%; transform: translate(-50%, -50%); }
.slide { position: absolute; left: -21px; bottom: 0; display: flex; height: 21px; }
.slide-ic { width: 21px; height: 21px; }
.slide span { width: 61px; padding-top: 4px; background: #d2ddd2; border-radius: 0 5px 0 0; text-align: center; font-weight: 700; font-feature-settings: normal; }
.hatch { height: 31px; background: repeating-linear-gradient(135deg, #aaacb0 0 3px, #8e9094 3px 5px); }
.vscroll { display: flex; flex-direction: column; align-items: center; padding: 1px 0; }
.vscroll::before { content: ""; order: 1; flex: 162; }
.vscroll .ch:first-child { order: 0; }
.vt { order: 2; flex: 223; width: 10px; background: #a6a6a6; }
.vscroll::after { content: ""; order: 3; flex: 158; }
.vscroll .down { order: 4; transform: rotate(180deg); }
.hscroll { display: flex; align-items: center; padding: 0 1px; }
.hscroll .left { transform: rotate(-90deg); }
.hscroll::before { content: ""; order: 1; flex: 238; }
.ht { order: 2; flex: 790; height: 10px; background: #a6a6a6; }
.hscroll .right { order: 3; transform: rotate(90deg); }
.ch { width: 8px; height: 10px; }

.palettes { flex: none; display: flex; align-items: flex-start; gap: 1px; padding: 2px 1px 0 3px; }
.vbar { width: 16px; display: flex; flex-direction: column; align-items: center; border-right: 1px solid #b0b0b0; border-bottom: 1px solid #b0b0b0; border-left: 1px solid #fafafa; background: #f3f3f3; }
.vbar::before { content: ""; width: 12px; height: 1px; margin: 1px 0 3px; background: #aaa; }
.vbar.low { margin-top: 268px; }
.group { display: grid; grid-auto-rows: 1fr; }
.group button { width: 13px; display: grid; place-items: center; }
.g10 { height: 147px; }
.g7 { height: 103px; }
.g4 { height: 59px; }
.g2 { height: 30px; }
.g1 { height: 15px; }
.hsep { width: 13px; height: 1px; margin: 1px 0 2px; background: #b0b0b0; }
.group .letter { font: bold 13px/13px "Liberation Sans", sans-serif; color: #333; }
.group .dxf { font: 6px/13px "Liberation Sans", sans-serif; color: #333; justify-content: center; }
.vmore { align-self: flex-end; height: 7px; line-height: 7px; font-size: 8px; color: #000; }

.coords { padding-right: 4px; font: 9px/11px "Liberation Mono", monospace; font-feature-settings: normal; }
.coords > span:not(.spin) { width: 12px; text-align: center; }
.coords > span:first-child { width: 8px; }
.coords > .wide:not(.spin) { width: 26px; }
.coords > .mid:not(.spin) { width: 14px; }

.status { flex: none; display: flex; justify-content: flex-end; gap: 2px; height: 13px; padding-right: 1px; margin-top: 1px; }
.status span { padding: 0 1px; border-left: 1px solid #a8a8a8; border-top: 1px solid #a8a8a8; white-space: nowrap; }
```
